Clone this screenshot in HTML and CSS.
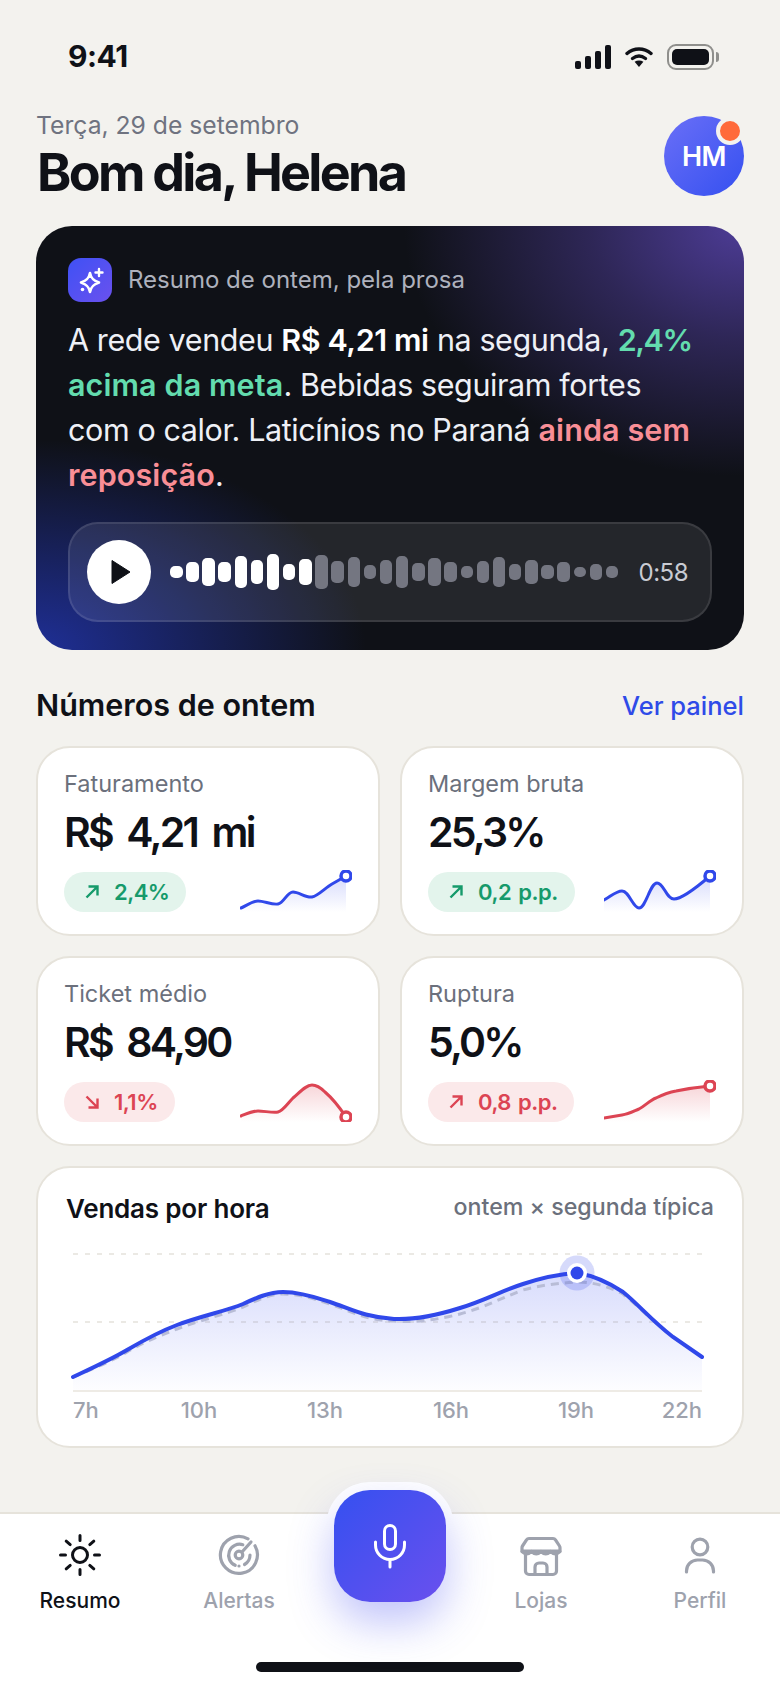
FILE: index.html
```html
<!DOCTYPE html>
<html lang="pt-BR">
<head>
  <meta charset="UTF-8">
  <meta name="viewport" content="width=device-width, initial-scale=1.0">
  <title>Resumo</title>
  <link rel="stylesheet" href="styles.css">
</head>
<body>
  <div class="screen">
    <main class="content">

      <div class="status-bar">
        <span class="status-time">9:41</span>
        <div class="status-icons">
          <svg width="36" height="24" viewBox="0 0 36 24" fill="#0f1117">
            <rect x="0" y="16" width="6" height="8" rx="2"/>
            <rect x="10" y="11" width="6" height="13" rx="2"/>
            <rect x="20" y="6" width="6" height="18" rx="2"/>
            <rect x="30" y="0" width="6" height="24" rx="2"/>
          </svg>
          <svg width="28" height="22" viewBox="0 0 28 22" fill="none" stroke="#0f1117" stroke-width="3.4" stroke-linecap="round">
            <path d="M2 7.5C9 1.5 19 1.5 26 7.5"/>
            <path d="M7.5 12.5C11.5 9.5 16.5 9.5 20.5 12.5"/>
            <path d="M14 21l-4.4-5.2c2.6-1.6 6.2-1.6 8.8 0z" fill="#0f1117" stroke="none"/>
          </svg>
          <div class="battery"><span class="battery-fill"></span></div>
        </div>
      </div>

      <header class="greeting">
        <div>
          <p class="greeting-date">Terça, 29 de setembro</p>
          <h1 class="greeting-title">Bom dia, Helena</h1>
        </div>
        <div class="avatar">HM<span class="avatar-dot"></span></div>
      </header>

      <section class="hero">
        <div class="hero-top">
          <div class="hero-icon">
            <svg width="44" height="44" viewBox="0 0 44 44" fill="none" stroke="#fff" stroke-linejoin="round" stroke-linecap="round">
              <path d="M22 15c1 5 3 7.5 9 9.5-6 2-8 4.5-9 9.5-1-5-3-7.5-9-9.5 6-2 8-4.5 9-9.5z" stroke-width="2.6"/>
              <path d="M31 11v7M27.5 14.5h7" stroke-width="2.4"/>
              <circle cx="14.5" cy="31.5" r="1.8" fill="#fff" stroke="none"/>
            </svg>
          </div>
          <span class="hero-label">Resumo de ontem, pela prosa</span>
        </div>

        <p class="hero-text">A rede vendeu <strong>R$ 4,21 mi</strong> na segunda, <strong class="good tight">2,4%</strong><br>
          <strong class="good">acima da meta</strong>. Bebidas seguiram fortes<br>
          com o calor. Laticínios no Paraná <strong class="bad">ainda sem</strong><br>
          <strong class="bad">reposição</strong>.</p>

        <div class="player">
          <button class="play-button">
            <svg width="20" height="26" viewBox="0 0 20 26"><path d="M1 1.5v23L19 13z" fill="#0f1117" stroke="#0f1117" stroke-linejoin="round"/></svg>
          </button>
          <div class="wave" id="wave"></div>
          <span class="player-time">0:58</span>
        </div>
      </section>

      <div class="section-head">
        <h2>Números de ontem</h2>
        <a class="section-link">Ver painel</a>
      </div>

      <div class="kpi-grid">
        <div class="kpi-card">
          <div class="kpi-label">Faturamento</div>
          <div class="kpi-value">R$ 4,21 mi</div>
          <div class="kpi-row">
            <span class="pill pill-good">
              <svg width="16" height="16" viewBox="0 0 16 16"><path d="M2.5 13.5L13 3M4.5 2.5H13.5V11.5"/></svg>2,4%
            </span>
            <svg class="spark" width="112" height="42" viewBox="0 0 112 42">
              <defs>
                <linearGradient id="fillBlue" x1="0" y1="0" x2="0" y2="1">
                  <stop offset="0" stop-color="#3b4ef0" stop-opacity=".2"/>
                  <stop offset="1" stop-color="#3b4ef0" stop-opacity="0"/>
                </linearGradient>
                <linearGradient id="fillRed" x1="0" y1="0" x2="0" y2="1">
                  <stop offset="0" stop-color="#dc4453" stop-opacity=".22"/>
                  <stop offset="1" stop-color="#dc4453" stop-opacity="0"/>
                </linearGradient>
              </defs>
              <path d="M1 38C6 36 12 31 18 31C24 31 32 35 38 34C44 33 47 22 53 22C59 22 66 28 72 27C78 26 85 18 92 14L106 6V42H1Z" fill="url(#fillBlue)"/>
              <path d="M1 38C6 36 12 31 18 31C24 31 32 35 38 34C44 33 47 22 53 22C59 22 66 28 72 27C78 26 85 18 92 14L106 6" fill="none" stroke="#3048ea" stroke-width="3" stroke-linecap="round"/>
              <circle cx="106" cy="6" r="5" fill="#fff" stroke="#3048ea" stroke-width="3.5"/>
            </svg>
          </div>
        </div>

        <div class="kpi-card">
          <div class="kpi-label">Margem bruta</div>
          <div class="kpi-value">25,3%</div>
          <div class="kpi-row">
            <span class="pill pill-good">
              <svg width="16" height="16" viewBox="0 0 16 16"><path d="M2.5 13.5L13 3M4.5 2.5H13.5V11.5"/></svg>0,2 p.p.
            </span>
            <svg class="spark" width="112" height="42" viewBox="0 0 112 42">
              <path d="M0 30C6 27 12 21 18 21C25 21 29 38 35 38C42 38 46 13 53 13C60 13 62 29 70 29C77 29 92 18 106 6V42H0Z" fill="url(#fillBlue)"/>
              <path d="M0 30C6 27 12 21 18 21C25 21 29 38 35 38C42 38 46 13 53 13C60 13 62 29 70 29C77 29 92 18 106 6" fill="none" stroke="#3048ea" stroke-width="3" stroke-linecap="round"/>
              <circle cx="106" cy="6" r="5" fill="#fff" stroke="#3048ea" stroke-width="3.5"/>
            </svg>
          </div>
        </div>

        <div class="kpi-card">
          <div class="kpi-label">Ticket médio</div>
          <div class="kpi-value">R$ 84,90</div>
          <div class="kpi-row">
            <span class="pill pill-bad">
              <svg width="16" height="16" viewBox="0 0 16 16"><path d="M2.5 2.5L13 13M13.5 4.5V13.5H4.5"/></svg>1,1%
            </span>
            <svg class="spark" width="112" height="42" viewBox="0 0 112 42">
              <path d="M1 36C6 34 12 31 18 31C24 31 33 33 38 32C43 31 48 23 53 18C60 12 66 5 72 5C78 5 82 9 85 12C92 18 100 28 106 37V42H1Z" fill="url(#fillRed)"/>
              <path d="M1 36C6 34 12 31 18 31C24 31 33 33 38 32C43 31 48 23 53 18C60 12 66 5 72 5C78 5 82 9 85 12C92 18 100 28 106 37" fill="none" stroke="#dc4453" stroke-width="3" stroke-linecap="round"/>
              <circle cx="106" cy="37" r="5" fill="#fff" stroke="#dc4453" stroke-width="3.5"/>
            </svg>
          </div>
        </div>

        <div class="kpi-card">
          <div class="kpi-label">Ruptura</div>
          <div class="kpi-value">5,0%</div>
          <div class="kpi-row">
            <span class="pill pill-bad">
              <svg width="16" height="16" viewBox="0 0 16 16"><path d="M2.5 13.5L13 3M4.5 2.5H13.5V11.5"/></svg>0,8 p.p.
            </span>
            <svg class="spark" width="112" height="42" viewBox="0 0 112 42">
              <path d="M0 38C6 37 12 36 18 35C25 34 30 31 35 29C41 26 46 20 52 18C60 14 66 12 72 11C82 9 95 7 106 6V42H0Z" fill="url(#fillRed)"/>
              <path d="M0 38C6 37 12 36 18 35C25 34 30 31 35 29C41 26 46 20 52 18C60 14 66 12 72 11C82 9 95 7 106 6" fill="none" stroke="#dc4453" stroke-width="3" stroke-linecap="round"/>
              <circle cx="106" cy="6" r="5" fill="#fff" stroke="#dc4453" stroke-width="3.5"/>
            </svg>
          </div>
        </div>
      </div>

      <section class="chart-card">
        <div class="chart-head">
          <h3>Vendas por hora</h3>
          <span>ontem × segunda típica</span>
        </div>
        <svg class="chart" width="648" height="190" viewBox="0 0 648 190">
          <defs>
            <linearGradient id="chartFill" x1="0" y1="0" x2="0" y2="1">
              <stop offset="0" stop-color="#3b4ef0" stop-opacity=".2"/>
              <stop offset="1" stop-color="#3b4ef0" stop-opacity=".01"/>
            </linearGradient>
          </defs>
          <!-- grid -->
          <path d="M7 18H636M7 86H636" stroke="#ebe9e4" stroke-width="2" stroke-dasharray="5 7"/>
          <path d="M7 155H636" stroke="#eeebe5" stroke-width="2"/>
          <!-- area, typical monday, yesterday -->
          <path d="M7 141C24 133 44 124 61 114C78 104 95 95 111 89C135 80 160 75 177 68C190 62 203 56 217 56C235 56 252 62 264 66C285 73 298 81 328 83C350 84 375 78 394 72C420 64 435 55 457 48C475 42 495 38 511 37C530 40 545 48 557 56C572 68 585 84 607 101L636 121V154H7Z" fill="url(#chartFill)"/>
          <path d="M7 141C24 134 44 126 61 116C78 106 95 99 111 93C135 84 160 78 177 71C190 65 203 58 217 58C235 58 252 64 264 68C285 75 298 84 328 85C350 87 375 83 394 78C420 71 435 62 457 54C475 49 495 47 511 46C530 46 545 52 557 58C572 70 585 84 607 101L636 121" fill="none" stroke="#b8bcd6" stroke-width="3" stroke-dasharray="8 6"/>
          <path d="M7 141C24 133 44 124 61 114C78 104 95 95 111 89C135 80 160 75 177 68C190 62 203 56 217 56C235 56 252 62 264 66C285 73 298 81 328 83C350 84 375 78 394 72C420 64 435 55 457 48C475 42 495 38 511 37C530 40 545 48 557 56C572 68 585 84 607 101L636 121" fill="none" stroke="#3048ea" stroke-width="4" stroke-linecap="round"/>
          <!-- peak -->
          <circle cx="511" cy="37" r="17.5" fill="#3048ea" fill-opacity=".2"/>
          <circle cx="511" cy="37" r="10" fill="#fff"/>
          <circle cx="511" cy="37" r="6.5" fill="#3048ea"/>
          <!-- hours -->
          <g class="chart-hours">
            <text x="7" y="182">7h</text>
            <text x="133" y="182" text-anchor="middle">10h</text>
            <text x="259" y="182" text-anchor="middle">13h</text>
            <text x="385" y="182" text-anchor="middle">16h</text>
            <text x="510" y="182" text-anchor="middle">19h</text>
            <text x="636" y="182" text-anchor="end">22h</text>
          </g>
        </svg>
      </section>
    </main>

    <nav class="tabbar">
      <div class="mic-notch"></div>
      <div class="tabs">
        <div class="tab tab-active">
          <svg width="44" height="44" viewBox="0 0 44 44" fill="none" stroke="currentColor" stroke-width="3" stroke-linecap="round">
            <circle cx="22" cy="22" r="7.5"/>
            <path d="M22 2.5v5M22 36.5v5M2.5 22h5M36.5 22h5M8.2 8.2l4 3.4M35.8 8.2l-4 3.4M8.2 35.8l4-3.4M35.8 35.8l-4-3.4"/>
          </svg>
          <span>Resumo</span>
        </div>
        <div class="tab">
          <svg width="44" height="44" viewBox="0 0 44 44" fill="none" stroke="currentColor" stroke-width="3.2" stroke-linecap="round">
            <path d="M31 5.8A18.5 18.5 0 1 0 38 12.8"/>
            <path d="M25.8 11.7A11 11 0 0 0 18.2 32.3"/>
            <path d="M33 22A11 11 0 0 1 27.5 31.5"/>
            <circle cx="22" cy="33" r="1.6" fill="currentColor" stroke="none"/>
            <circle cx="22" cy="22" r="3.8"/>
            <path d="M25 19L34 9"/>
          </svg>
          <span>Alertas</span>
        </div>
        <div></div>
        <div class="tab">
          <svg width="44" height="44" viewBox="0 0 44 44" fill="none" stroke="currentColor" stroke-width="3.2" stroke-linecap="round" stroke-linejoin="round">
            <path d="M10 5.5h24a3 3 0 0 1 2.5 1.3l4 6.2a3 3 0 0 1 .5 1.7v3.300H3v-3.300a3 3 0 0 1 .5-1.700l4-6.200A3 3 0 0 1 10 5.500z"/>
            <path d="M3 18.5c3.2 3 6.3 3 9.500 0 3.100 3 6.400 3 9.500 0 3.100 3 6.400 3 9.500 0 3.200 3 6.300 3 9.500 0"/>
            <path d="M6.5 22v16a3.5 3.5 0 0 0 3.500 3.500h24a3.500 3.500 0 0 0 3.500-3.500V22"/>
            <path d="M16 41v-7a4 4 0 0 1 4-4h4a4 4 0 0 1 4 4v7"/>
          </svg>
          <span>Lojas</span>
        </div>
        <div class="tab">
          <svg width="44" height="44" viewBox="0 0 44 44" fill="none" stroke="currentColor" stroke-width="3.2" stroke-linecap="round">
            <circle cx="22" cy="14" r="7.8"/>
            <path d="M8.5 39v-1a11 11 0 0 1 11-11h5a11 11 0 0 1 11 11v1"/>
          </svg>
          <span>Perfil</span>
        </div>
      </div>
      <div class="home-indicator"></div>
      <button class="mic-button">
        <svg width="44" height="52" viewBox="0 0 44 52" fill="none" stroke="#fff" stroke-width="3" stroke-linecap="round">
          <rect x="16.5" y="5.5" width="11" height="24" rx="5.5"/>
          <path d="M7.5 22v3a14.5 14.5 0 0 0 29 0v-3"/>
          <path d="M22 40v7"/>
        </svg>
      </button>
    </nav>
  </div>

  <script>
    // Audio waveform: bar heights in px, the first nine are already played
    const heights = [12, 20, 28, 20, 32, 24, 36, 16, 26, 34, 22, 30, 14, 24, 32, 18, 28, 20, 12, 22, 30, 16, 24, 14, 20, 10, 16, 12];
    const wave = document.getElementById("wave");

    heights.forEach((h, i) => {
      const bar = document.createElement("span");
      bar.classList.add("wave-bar");
      if (i < 9) bar.classList.add("played");
      bar.style.height = h + "px";
      wave.appendChild(bar);
    });
  </script>
</body>
</html>
```

FILE: styles.css
```css
* {
  box-sizing: border-box;
}
body {
  margin: 0;
  background-color: #f3f2ee;
  color: #0f1117;
  font-family: Inter, "Noto Sans", sans-serif;
}
h1, h2, h3, p {
  margin: 0;
}
.screen {
  width: 780px;
  height: 1688px;
  display: flex;
  flex-direction: column;
  overflow: hidden;
}
.content {
  flex: 1;
  padding: 0 36px;
}

/* status bar */
.status-bar {
  height: 108px;
  padding: 34px 30px 0 32px;
  display: flex;
  justify-content: space-between;
  align-items: flex-start;
}
.status-time {
  font-size: 30px;
  line-height: 44px;
  font-weight: 700;
  letter-spacing: -0.5px;
}
.status-icons {
  display: flex;
  align-items: center;
  gap: 14px;
  padding-top: 10px;
}
.battery {
  width: 47px;
  height: 26px;
  padding: 3px;
  border: 2px solid #8f8f8c;
  border-radius: 9px;
  position: relative;
}
.battery::after {
  content: "";
  position: absolute;
  right: -7px;
  top: 6px;
  width: 3px;
  height: 10px;
  border-radius: 0 3px 3px 0;
  background: #8f8f8c;
}
.battery-fill {
  display: block;
  height: 100%;
  background: #0f1117;
  border-radius: 5px;
}

/* greeting */
.greeting {
  height: 118px;
  display: flex;
  justify-content: space-between;
  align-items: flex-start;
}
.greeting-date {
  font-size: 24.7px;
  line-height: 34px;
  color: #6f7380;
}
.greeting-title {
  font-size: 52px;
  line-height: 62px;
  font-weight: 700;
  letter-spacing: -2.7px;
  margin-left: 1px;
}
.avatar {
  width: 80px;
  height: 80px;
  margin-top: 8px;
  border-radius: 50%;
  background: linear-gradient(135deg, #6a6ff7, #3550f0);
  color: #fff;
  font-size: 27px;
  font-weight: 600;
  letter-spacing: -0.5px;
  display: flex;
  align-items: center;
  justify-content: center;
  position: relative;
}
.avatar-dot {
  position: absolute;
  top: 1px;
  right: 0;
  width: 28px;
  height: 28px;
  border: 4px solid #f3f2ee;
  border-radius: 50%;
  background: #ff6a3a;
}

/* summary card */
.hero {
  height: 424px;
  padding: 32px;
  border-radius: 36px;
  color: #eef0f6;
  background-color: #0f1117;
  background-image:
    radial-gradient(340px 250px at 100% 0%, #4d3c96 0%, rgba(77, 60, 150, 0.5) 45%, rgba(77, 60, 150, 0) 100%),
    radial-gradient(330px 210px at 0% 100%, #1f2f96 0%, rgba(31, 47, 150, 0) 100%);
}
.hero-top {
  display: flex;
  align-items: center;
  gap: 16px;
}
.hero-icon {
  width: 44px;
  height: 44px;
  border-radius: 13px;
  background: linear-gradient(135deg, #3f51f5, #6a51ee);
}
.hero-label {
  margin-bottom: 2px;
  font-size: 24px;
  color: #aeb1bd;
}
.hero-text {
  margin-top: 15px;
  font-size: 30.5px;
  line-height: 45px;
  letter-spacing: -0.4px;
}
.hero-text strong {
  font-weight: 600;
  color: #fff;
}
.hero-text .good {
  color: #63dcae;
  letter-spacing: 0.1px;
}
.hero-text .bad {
  color: #f98e96;
  letter-spacing: 0.1px;
}
.hero-text .tight {
  letter-spacing: -1.4px;
}

/* audio player */
.player {
  height: 100px;
  margin-top: 25px;
  padding: 0 22px 0 17px;
  display: flex;
  align-items: center;
  border: 2px solid rgba(255, 255, 255, 0.1);
  border-radius: 30px;
  background: rgba(255, 255, 255, 0.09);
}
.play-button {
  width: 64px;
  height: 64px;
  padding: 0 0 0 3px;
  border: none;
  border-radius: 50%;
  background: #fff;
  display: flex;
  align-items: center;
  justify-content: center;
}
.wave {
  margin-left: 19px;
  display: flex;
  align-items: center;
  gap: 3.65px;
}
.wave-bar {
  width: 12.5px;
  border-radius: 5px;
  background: #747681;
}
.wave-bar.played {
  background: #fff;
}
.player-time {
  margin-left: auto;
  font-size: 24px;
  letter-spacing: -0.5px;
  color: #c9cbd3;
}

/* yesterday's numbers */
.section-head {
  height: 96px;
  padding-top: 12px;
  display: flex;
  justify-content: space-between;
  align-items: center;
}
.section-head h2 {
  font-size: 30.5px;
  font-weight: 600;
}
.section-link {
  margin-top: 3px;
  font-size: 25.5px;
  font-weight: 500;
  color: #2f4be8;
}
.kpi-grid {
  display: grid;
  grid-template-columns: 1fr 1fr;
  gap: 20px;
}
.kpi-card {
  height: 190px;
  padding: 20px 26px 22px;
  border: 2px solid #e6e3db;
  border-radius: 34px;
  background: #fff;
}
.kpi-label {
  font-size: 23.5px;
  line-height: 32px;
  color: #6b707c;
}
.kpi-value {
  margin-top: 8px;
  font-size: 41px;
  line-height: 48px;
  font-weight: 600;
  letter-spacing: -2.8px;
  word-spacing: 7px;
}
.kpi-row {
  margin-top: 14px;
  display: flex;
  justify-content: space-between;
  align-items: flex-end;
}
.pill {
  height: 40px;
  padding: 0 17px 0 20px;
  border-radius: 20px;
  font-size: 22px;
  font-weight: 600;
  letter-spacing: -0.5px;
  word-spacing: 2px;
  display: flex;
  align-items: center;
  gap: 14px;
}
.pill svg {
  fill: none;
  stroke: currentColor;
  stroke-width: 2.4;
}
.pill-good {
  background: #e3f4ec;
  color: #169a6b;
}
.pill-bad {
  background: #fbe9ea;
  color: #dc4453;
}
.spark {
  display: block;
}

/* hourly sales */
.chart-card {
  height: 282px;
  margin-top: 20px;
  padding: 22px 28px 0;
  border: 2px solid #e6e3db;
  border-radius: 34px;
  background: #fff;
}
.chart-head {
  height: 36px;
  display: flex;
  justify-content: space-between;
  align-items: center;
}
.chart-head h3 {
  font-size: 26px;
  font-weight: 600;
  letter-spacing: -0.2px;
}
.chart-head span {
  padding-bottom: 3px;
  font-size: 23.2px;
  font-weight: 500;
  color: #6b707c;
}
.chart {
  display: block;
  margin-top: 10px;
}
.chart-hours {
  font-size: 22px;
  font-weight: 500;
  fill: #9ea2ad;
}

/* bottom tabs */
.tabbar {
  height: 176px;
  padding-top: 19px;
  border-top: 2px solid #e6e3db;
  background: #fff;
  position: relative;
}
.tabs {
  display: grid;
  grid-template-columns: 160px 158px 1fr 158px 160px;
}
.tab {
  display: flex;
  flex-direction: column;
  align-items: center;
  color: #9ea2ad;
  font-size: 21px;
  font-weight: 500;
}
.tab span {
  margin-top: 9px;
  line-height: 30px;
}
.tab-active {
  color: #0f1117;
}
.home-indicator {
  position: absolute;
  left: 256px;
  bottom: 16px;
  width: 268px;
  height: 10px;
  border-radius: 5px;
  background: #0f1117;
}
/* white collar that shows above the bar's top edge */
.mic-notch {
  position: absolute;
  left: 326px;
  top: -32px;
  width: 128px;
  height: 64px;
  border-radius: 44px 44px 0 0;
  background: #fff;
}
.mic-button {
  position: absolute;
  left: 334px;
  top: -24px;
  width: 112px;
  height: 112px;
  padding: 0;
  border: none;
  border-radius: 36px;
  background: linear-gradient(135deg, #3550f0, #6a50ee);
  box-shadow: 0 20px 44px rgba(70, 80, 240, 0.34);
  display: flex;
  align-items: center;
  justify-content: center;
}
```
